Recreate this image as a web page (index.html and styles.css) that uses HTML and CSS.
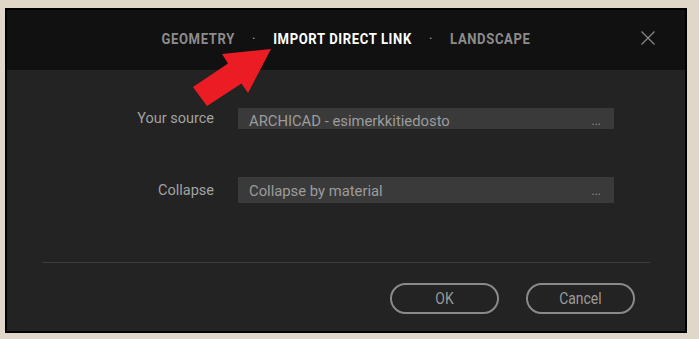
FILE: index.html
```html
<html>
  <head>
    <title>Import direct link</title>
    <meta charset="UTF-8">
    <link rel="stylesheet" href="styles.css">
  </head>
  <body>
    <div class="dialog">
      <div class="header">
        <div class="spacer"></div>
        <nav class="tabs">
          <span class="tab">GEOMETRY</span>
          <span class="dot">·</span>
          <span class="tab active">IMPORT DIRECT LINK</span>
          <span class="dot">·</span>
          <span class="tab">LANDSCAPE</span>
        </nav>
        <div class="close">
          <svg width="14" height="14" viewBox="0 0 14 14">
            <path d="M0.5 0.5 L13.5 13.5 M13.5 0.5 L0.5 13.5" stroke="#8a8a8a" stroke-width="1.2" fill="none"/>
          </svg>
        </div>
      </div>
      <div class="content">
        <div class="form">
          <label class="label">Your source</label>
          <div class="field first">
            <span>ARCHICAD - esimerkkitiedosto</span>
            <span class="more">...</span>
          </div>
          <label class="label">Collapse</label>
          <div class="field second">
            <span>Collapse by material</span>
            <span class="more">...</span>
          </div>
        </div>
        <div class="divider"></div>
        <div class="buttons">
          <button class="btn"><span>OK</span></button>
          <button class="btn"><span>Cancel</span></button>
        </div>
      </div>
    </div>
    <!-- annotation arrow drawn over the screenshot -->
    <svg class="arrow" width="699" height="339" viewBox="0 0 699 339">
      <polygon points="271,49 222,54 228,63.5 193,87 207,106 241.5,83.5 248,93" fill="#ec1c24"/>
    </svg>
  </body>
</html>
```

FILE: styles.css
```css
body {
  margin: 0;
  width: 699px;
  height: 339px;
  overflow: hidden;
  background: #e1d7c9;
  font-family: Roboto, "Liberation Sans", sans-serif;
  position: relative;
}

.dialog {
  margin: 8px 0 0 5px;
  width: 678px;
  height: 321px;
  border: 2px solid #000;
  background: #232323;
  display: flex;
  flex-direction: column;
}

.header {
  height: 60px;
  background: #111111;
  display: grid;
  grid-template-columns: 1fr auto 1fr;
  align-items: center;
}

.tabs {
  display: flex;
  align-items: center;
  gap: 19px;
  font-size: 14.5px;
  font-weight: bold;
  letter-spacing: 0.7px;
  color: #8c8c8c;
  transform: scaleX(0.9);
  padding-bottom: 1px;
}
.tab.active {
  color: #fff;
}
.dot {
  color: #aaa;
  font-weight: normal;
}

.close {
  justify-self: end;
  margin-right: 30px;
  height: 14px;
  margin-top: -5px;
}

.content {
  flex: 1;
  padding: 38px 35px 17px;
  display: flex;
  flex-direction: column;
}

.form {
  display: grid;
  grid-template-columns: 172px 376px;
  column-gap: 24px;
  row-gap: 48px;
  align-items: center;
  font-size: 14.5px;
}
.label {
  text-align: right;
  color: #a2a2a2;
}
.field {
  background: #3a3a3a;
  color: #9c9c9c;
  font-size: 14.8px;
  display: flex;
  justify-content: space-between;
  padding: 0 13px 0 11px;
  box-sizing: border-box;
}
.field.first {
  height: 21px;
  line-height: 27px;
  overflow: hidden;
}
.field.second {
  height: 26px;
  line-height: 29px;
}
.more {
  font-size: 12px;
  color: #8e8e8e;
}

.divider {
  margin-top: 59px;
  height: 1px;
  background: #3b3b3b;
}

.buttons {
  margin-top: 20px;
  display: flex;
  justify-content: flex-end;
  gap: 27px;
  padding-right: 15px;
}
.btn {
  width: 109px;
  height: 31px;
  border: 2px solid #8a8a8a;
  border-radius: 16px;
  background: transparent;
  color: #9a9a9a;
  font-family: Roboto, "Liberation Sans", sans-serif;
  font-size: 16px;
  padding: 0;
}
.btn span {
  display: inline-block;
  transform: scaleX(0.87);
}

.arrow {
  position: absolute;
  left: 0;
  top: 0;
  pointer-events: none;
}
```
